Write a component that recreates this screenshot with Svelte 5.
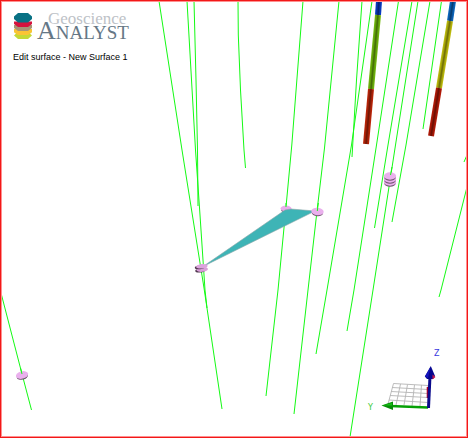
<script>
  const drillholes = [
    '159,1 182,150 204,288 222,409',
    '187,1 195.5,150 200,215 205,290 207,308',
    '194,1 196,80 197.5,150 198,206',
    '238,1 238.3,35 240.5,90 244,150 245.5,168',
    '303,1 291.8,145 286,207 278,290 266,396',
    '339,1 324.5,148 317,211 308,290 294,414',
    '362,1 356.5,80 352,157',
    '372,1 351.5,145 327,290 316,354',
    '398.5,1 376.5,145 354,290 347,331',
    '412,1 388,145 374.5,228',
    '418,1 395.5,145 373,290 350,437',
    '430,1 406,145 392,222',
    '441.5,1 423,129',
    '467,155 464,162',
    '467,187 441,290 439,297',
    '1,293 22,374 31.5,410'
  ];
  const markers = [
    { x: 22, y: 375, tilt: -14, ys: [0] },
    { x: 317.5, y: 211.5, tilt: 4, ys: [0] },
    { x: 390, y: 182, tilt: 0, ys: [0, -3, -6] }
  ];
  const cores = [
    { x1: 379, y1: 1, x2: 378, y2: 15, fill: '#0a3cc4' },
    { x1: 378, y1: 15, x2: 371, y2: 89, fill: '#72b80e' },
    { x1: 371, y1: 89, x2: 366, y2: 144, fill: '#bc260a' },
    { x1: 453, y1: 1, x2: 450, y2: 21, fill: '#0c66bd' },
    { x1: 450, y1: 21, x2: 439, y2: 88, fill: '#bdbb0c' },
    { x1: 439, y1: 88, x2: 431, y2: 136, fill: '#b41a08' }
  ];
</script>

<main>
  <svg class="scene" viewBox="0 0 468 438" role="img" aria-label="3D drillhole view">
    {#each drillholes as points}
      <polyline class="hole" {points} />
    {/each}

    {#each cores as c}
      <line x1={c.x1} y1={c.y1} x2={c.x2} y2={c.y2} stroke={c.fill} stroke-width="6" />
      <line x1={c.x1} y1={c.y1} x2={c.x2} y2={c.y2} stroke="#000" stroke-opacity=".15" stroke-width="4" />
      <line x1={c.x1} y1={c.y1} x2={c.x2} y2={c.y2} stroke="#000" stroke-opacity=".28" stroke-width="1.6" />
    {/each}

    <g transform="translate(286 208.5)">
      <ellipse cy="1.4" rx="4.8" ry="2.4" fill="#70566f" />
      <ellipse rx="5.5" ry="2.9" fill="#e9aceb" />
    </g>
    <path d="M286 207V203" class="hole" />
    <polygon points="203,266.5 285,210 291,209 315,211" fill="#3eb4b6" stroke="#8ba6a7" stroke-width=".6" />

    {#each markers as m}
      <g transform="translate({m.x} {m.y}) rotate({m.tilt})">
        {#each m.ys as y}
          <ellipse cy={y + 1.4} rx="5.7" ry="3.3" fill="#70566f" />
          <ellipse cy={y} rx="6.2" ry="3.7" fill="#eab0ed" />
        {/each}
      </g>
    {/each}
    <path class="hole" d="M317.3 211 318.3 203M390.5 175 392 167M22 374 20.5 368" />

    <g transform="translate(201 268) rotate(-6)">
      <ellipse cx="-1" cy="2.4" rx="5" ry="2" fill="#51384f" />
      <ellipse cx="1" cy="1.6" rx="5.8" ry="2.4" fill="#d99fd9" />
      <ellipse cx="-1" cy="-.7" rx="5.2" ry="1.8" fill="#51384f" />
      <ellipse cx="1" cy="-1.6" rx="5.8" ry="2.2" fill="#dca4dd" />
    </g>

    <g fill="none" stroke="#b4b4b4" stroke-width=".9">
      <path d="M393.5 383.5 428 385.5M392 387.5 428 389.5M391 391.5 428 393.5M390 395.5 428 397.5M389 400 428 402.5" />
      <path d="M393.5 383.5 388 404M400.5 384 396 405M407.5 384.5 404 405M414.5 385 412 406M421.5 385 420 406M428 385.5V406" />
    </g>
    <path d="M427.5 387V398" stroke="#b40028" stroke-width="1.6" />
    <path d="M390 406 428 407.5" stroke="#05a005" stroke-width="2.6" />
    <path d="M381.5 405.5 393 401.5V410Z" fill="#078d07" />
    <path d="M382 405.5 392 403V405.5Z" fill="#16bd16" />
    <path d="M428.5 408 430 376" stroke="#0a0a8c" stroke-width="3" />
    <path d="M430.8 366 435 376 433 379H427L424.8 376.5Z" fill="#07078e" />
    <path d="M430.5 367 425 376.5 428 378Z" fill="#1515bd" />
    <path d="M432.5 374.5 435.5 377 432.5 379.5Z" fill="#c3174c" />
    <text x="368" y="410" fill="#34c934">Y</text>
    <text x="434" y="356" fill="#3838e0">Z</text>
  </svg>

  <header>
    <div class="brand">
      <svg class="mark" viewBox="0 0 20 28" aria-hidden="true">
        <path d="M1 19 3 20.5 1 22.5 5 26H15L19 22.5 17 20.5 19 19Z" fill="#c5d936" />
        <path d="M1 16H19V19L15 22H5L1 19Z" fill="#fbc434" />
        <path d="M1 12H19V15L15 18H5L1 15Z" fill="#a79576" />
        <path d="M1 8.5H19V11L15 14H5L1 11Z" fill="#d5133e" />
        <path d="M1 3.5 5 0H15L19 3.5V6L15 9.5H5L1 6Z" fill="#087184" />
      </svg>
      <div class="name">
        <span class="top">Geoscience</span>
        <span class="bottom"><b>A</b>NALYST</span>
      </div>
    </div>
    <p>Edit surface - New Surface 1</p>
  </header>
</main>

<style>
  main {
    display: grid;
    background: #fff;
    position: relative;
  }
  main::after {
    content: '';
    position: absolute;
    inset: 0;
    border: 1px solid #f21818;
    box-shadow: inset 0 0 0 1px #ff9090;
    pointer-events: none;
  }
  .scene {
    grid-area: 1 / 1;
    display: block;
    width: 100%;
    height: auto;
  }
  .hole {
    fill: none;
    stroke: #14fa14;
    stroke-width: 1;
  }
  text {
    font: 8px 'DejaVu Sans', sans-serif;
  }
  header {
    grid-area: 1 / 1;
    z-index: 1;
    justify-self: start;
    align-self: start;
    padding: 13px;
  }
  .brand {
    display: flex;
    gap: 4px;
  }
  .mark {
    width: 20px;
    height: 28px;
  }
  .name {
    display: flex;
    flex-direction: column;
    font-family: 'Liberation Serif', serif;
    white-space: nowrap;
  }
  .top {
    padding-left: 11px;
    font-size: 17px;
    line-height: 12px;
    color: #bdc2c7;
  }
  .bottom {
    font-size: 19px;
    line-height: 12px;
    color: #657786;
  }
  .bottom b {
    font-size: 26px;
    font-weight: 400;
    line-height: 12px;
  }
  p {
    margin: 10px 0 0;
    font: 9px/12px 'Liberation Sans', Arial, sans-serif;
    color: #000;
  }
</style>
